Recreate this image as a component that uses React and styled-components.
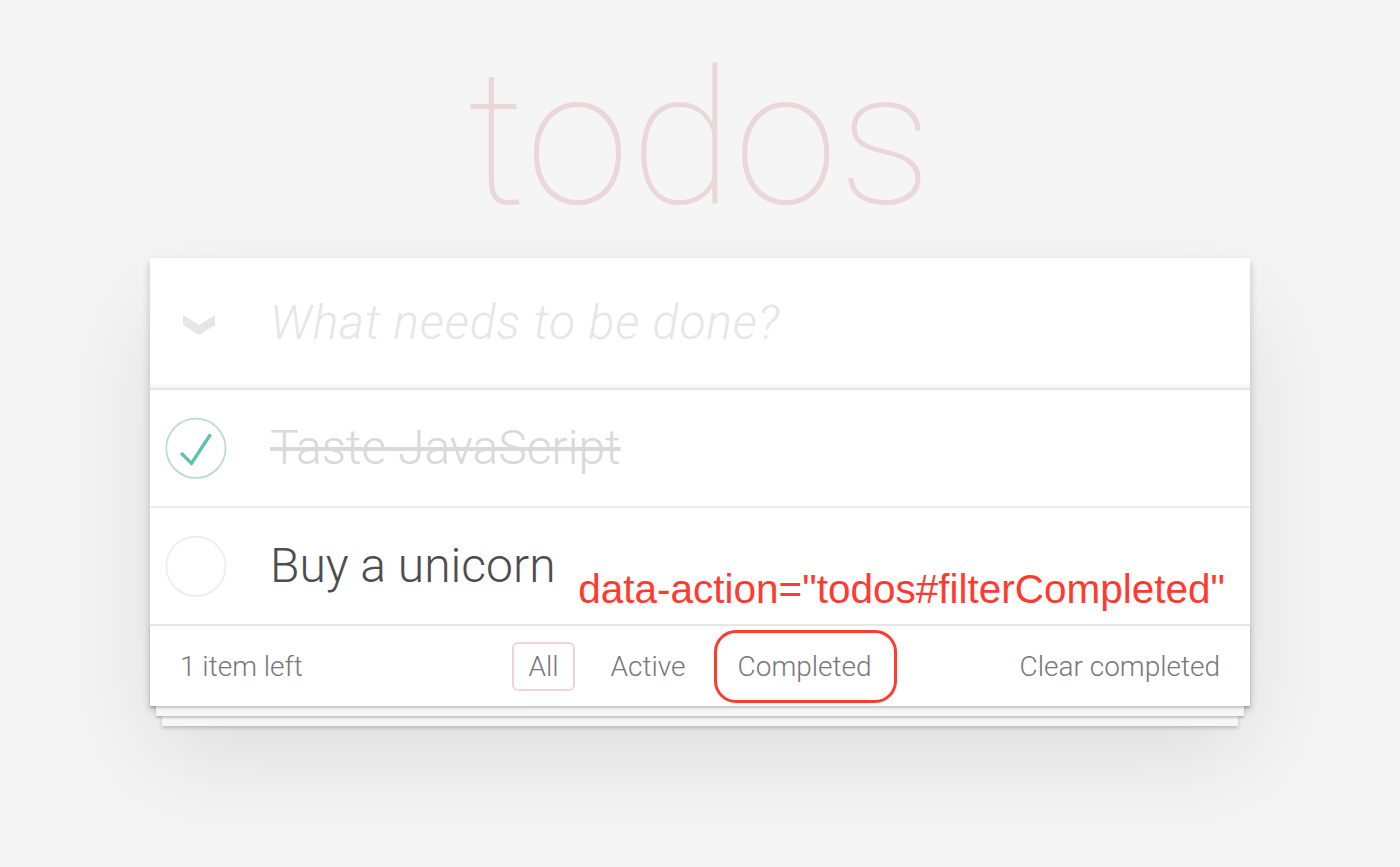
import React from "react";
import styled, { createGlobalStyle } from "styled-components";

const Global = createGlobalStyle`
  html, body { margin: 0; padding: 0; }
  body {
    background: #f5f5f5;
    font-family: Roboto, "Liberation Sans", sans-serif;
    font-weight: 300;
    color: #4d4d4d;
    -webkit-font-smoothing: antialiased;
  }
`;

const Page = styled.div`
  width: 1400px;
  min-height: 867px;
  padding-top: 45px;
  box-sizing: border-box;
  display: flex;
  flex-direction: column;
  align-items: center;
`;

const Title = styled.h1`
  margin: 0 0 25px;
  height: 188px;
  font-size: 188px;
  line-height: 188px;
  font-weight: 100;
  color: rgba(175, 47, 47, 0.15);
  text-align: center;
  letter-spacing: 1px;
`;

const App = styled.section`
  position: relative;
  width: 1100px;
  background: #fff;
  box-shadow: 0 4px 8px rgba(0, 0, 0, 0.2), 0 50px 100px rgba(0, 0, 0, 0.1);
`;

const Header = styled.header`
  display: flex;
  align-items: center;
  height: 130px;
  box-shadow: inset 0 -4px 2px rgba(0, 0, 0, 0.03);
`;

const ToggleAll = styled.div`
  width: 120px;
  display: flex;
  align-items: center;
  padding-left: 33px;
  padding-top: 3px;
  box-sizing: border-box;
  svg { display: block; }
`;

const NewTodo = styled.input`
  flex: 1;
  border: none;
  outline: none;
  background: transparent;
  font-family: inherit;
  font-size: 48px;
  line-height: 1.4em;
  padding: 0 32px 0 0;
  color: #4d4d4d;
  &::placeholder {
    font-style: italic;
    font-weight: 300;
    color: #e6e6e6;
    letter-spacing: 0.9px;
  }
`;

const List = styled.ul`
  margin: 0;
  padding: 0;
  list-style: none;
  border-top: 2px solid #e6e6e6;
`;

const Item = styled.li`
  display: flex;
  align-items: center;
  border-bottom: ${(p) => (p.$last ? "none" : "2px solid #ededed")};
`;

const Check = styled.svg`
  flex: none;
  width: 80px;
  height: 80px;
  margin-right: 40px;
`;

const Label = styled.label`
  flex: 1;
  font-size: 48px;
  line-height: 56px;
  padding: 30px 120px 30px 0;
  color: ${(p) => (p.$done ? "#d9d9d9" : "#4d4d4d")};
  text-decoration: ${(p) => (p.$done ? "line-through" : "none")};
`;

const Footer = styled.footer`
  display: grid;
  grid-template-columns: 1fr auto 1fr;
  align-items: center;
  height: 40px;
  padding: 16px 30px 24px;
  border-top: 2px solid #e6e6e6;
  color: #777;
  font-size: 28px;
  line-height: 40px;
  box-shadow: 0 2px 2px rgba(0, 0, 0, 0.2), 0 16px 0 -6px #f6f6f6,
    0 18px 2px -6px rgba(0, 0, 0, 0.2), 0 32px 0 -12px #f6f6f6,
    0 34px 4px -12px rgba(0, 0, 0, 0.2);
`;

const Count = styled.span`
  justify-self: start;
`;

const Filters = styled.ul`
  display: flex;
  gap: 20px;
  margin: 0;
  padding: 0;
  list-style: none;
`;

const FilterLink = styled.a`
  position: relative;
  display: inline-block;
  padding: 6px 14px;
  line-height: normal;
  border: 2px solid ${(p) => (p.$selected ? "rgba(175, 47, 47, 0.2)" : "transparent")};
  border-radius: 6px;
  color: inherit;
  text-decoration: none;
  ${(p) =>
    p.$highlight &&
    `
    &::after {
      content: "";
      position: absolute;
      left: -10px;
      right: -11px;
      top: -14px;
      bottom: -14px;
      border: 3px solid #ff3b30;
      border-radius: 22px;
    }
  `}
`;

const Clear = styled.span`
  justify-self: end;
`;

const Annotation = styled.div`
  position: absolute;
  right: 25px;
  top: 311px;
  font-family: "Liberation Sans", Arial, sans-serif;
  font-weight: 400;
  font-size: 40.5px;
  line-height: 1;
  color: #ff3b30;
  white-space: nowrap;
`;

function Toggle({ done }) {
  return (
    <Check viewBox="-10 -18 100 135">
      <circle cx="50" cy="50" r="50" fill="none" stroke={done ? "#bddad5" : "#ededed"} strokeWidth="3" />
      {done && <path fill="#5dc2af" d="M72 25L42 71 27 56l-4 4 20 20 34-52z" />}
    </Check>
  );
}

const todos = [
  { title: "Taste JavaScript", done: true },
  { title: "Buy a unicorn", done: false },
];

export default function TodoApp() {
  return (
    <>
      <Global />
      <Page>
        <Title>todos</Title>
        <App>
          <Header>
            <ToggleAll>
              <svg width="32" height="20" viewBox="0 0 32 20">
                <polygon points="0,0 16,10 32,0 32,10 16,20 0,10" fill="#e6e6e6" />
              </svg>
            </ToggleAll>
            <NewTodo placeholder="What needs to be done?" />
          </Header>
          <List>
            {todos.map((t, i) => (
              <Item key={t.title} $last={i === todos.length - 1}>
                <Toggle done={t.done} />
                <Label $done={t.done}>{t.title}</Label>
              </Item>
            ))}
          </List>
          <Footer>
            <Count>1 item left</Count>
            <Filters>
              <li><FilterLink $selected>All</FilterLink></li>
              <li><FilterLink>Active</FilterLink></li>
              <li><FilterLink $highlight>Completed</FilterLink></li>
            </Filters>
            <Clear>Clear completed</Clear>
          </Footer>
          <Annotation>data-action="todos#filterCompleted"</Annotation>
        </App>
      </Page>
    </>
  );
}
